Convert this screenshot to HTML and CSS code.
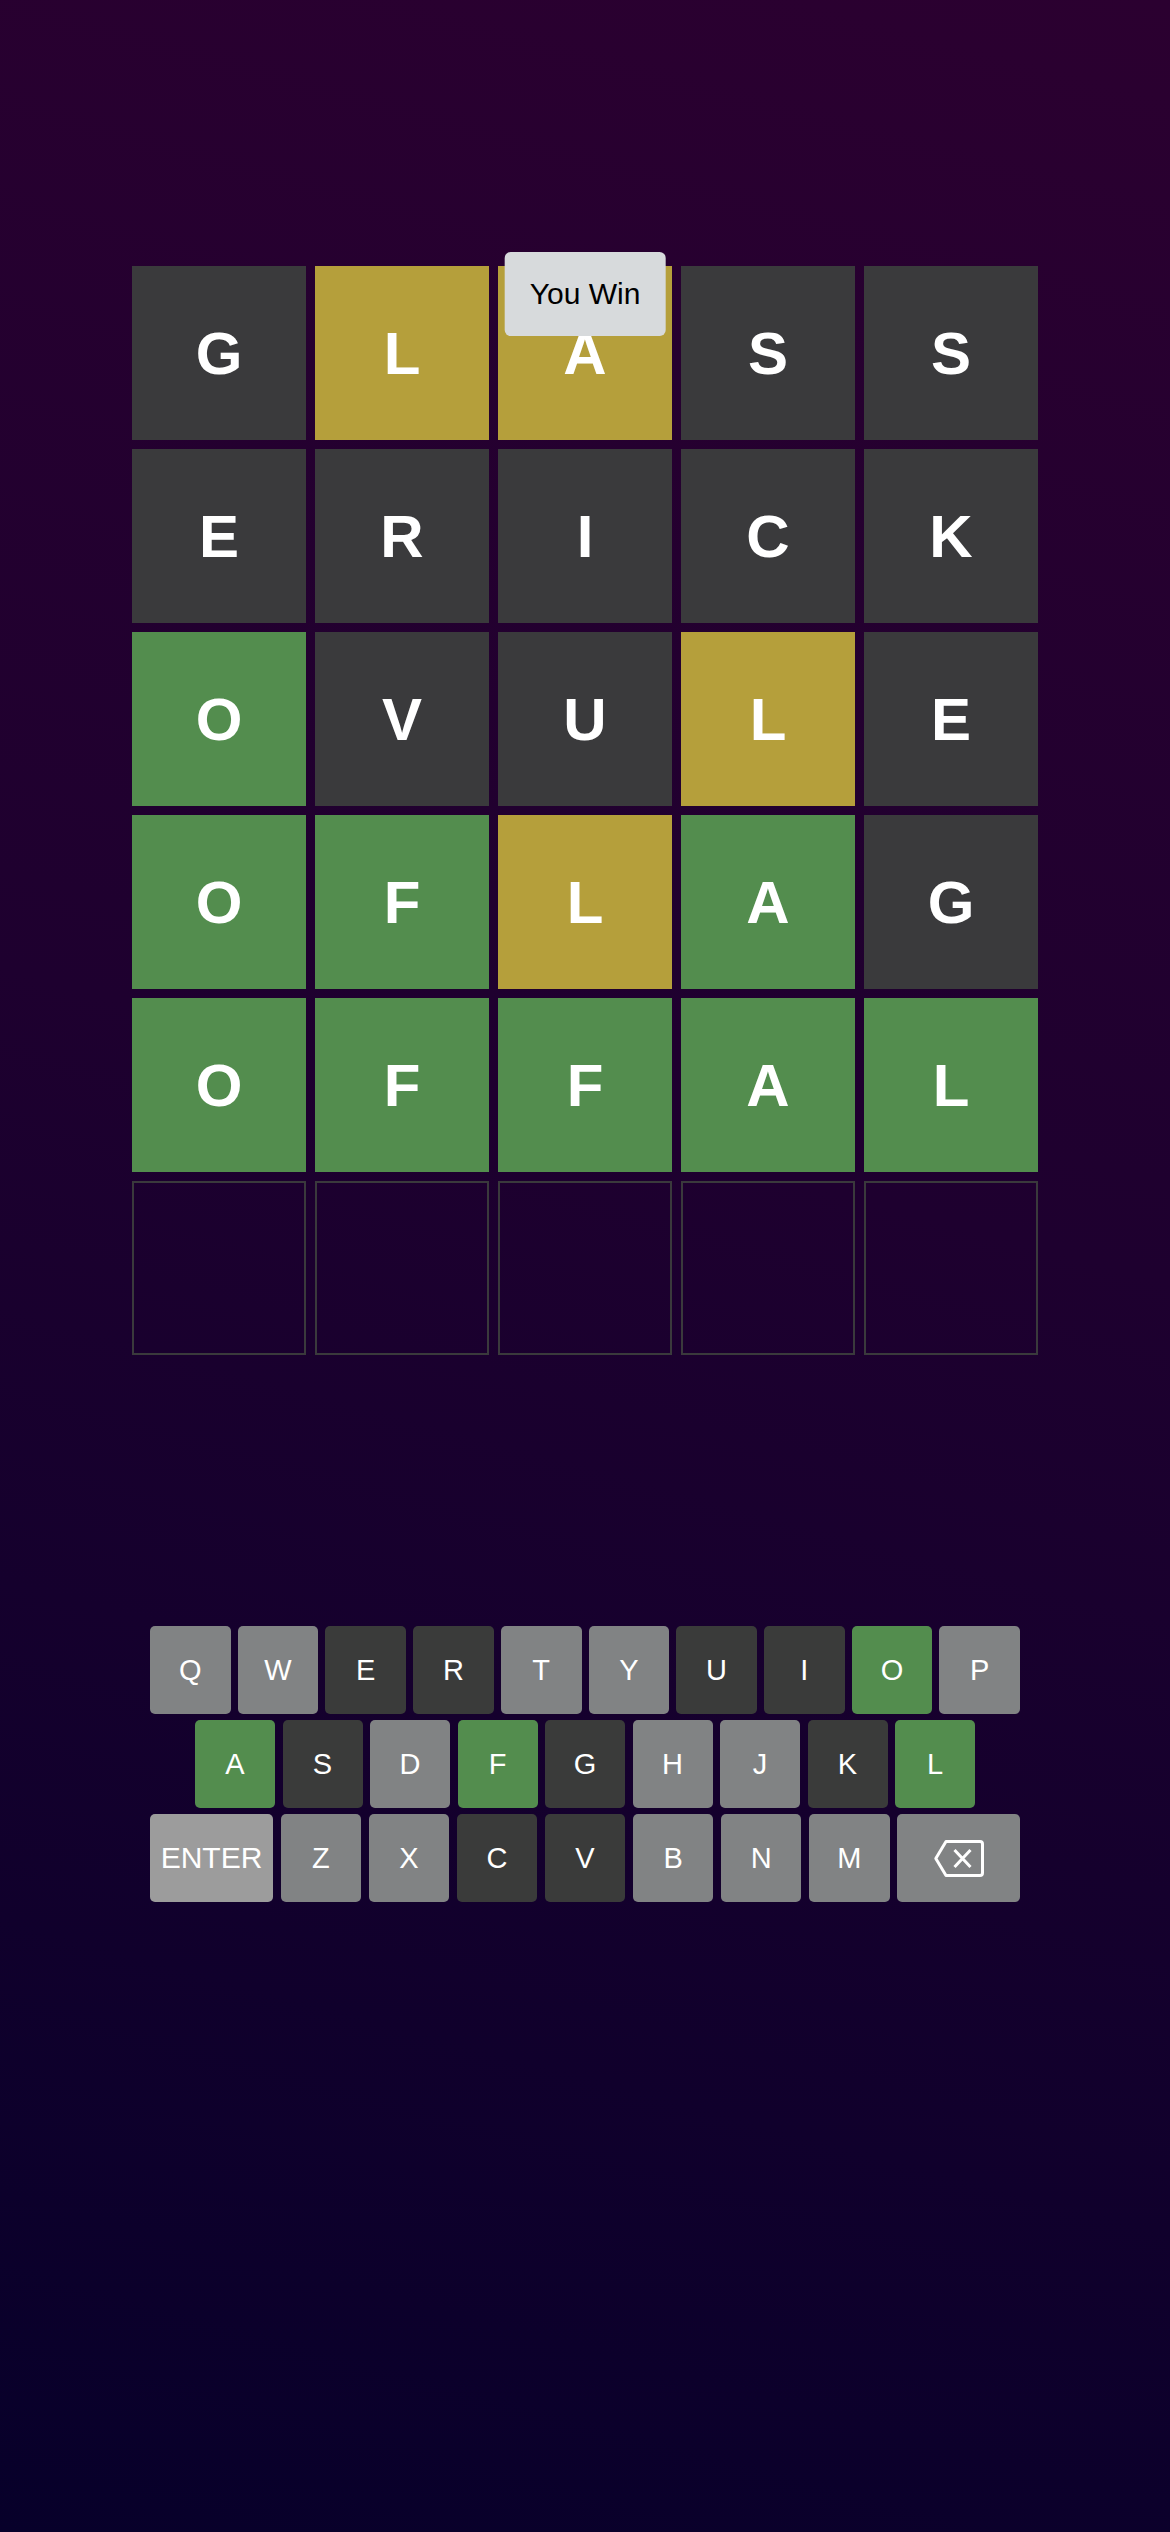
FILE: index.html
```html
<!DOCTYPE html>
<html lang="en">
<head>
<meta charset="utf-8">
<title>Wordle</title>
<link rel="stylesheet" href="styles.css">
</head>
<body>
<main class="app">
  <section class="board-wrap">
    <div class="toast">You Win</div>
    <div class="board">
      <div class="tile absent">G</div>
      <div class="tile present">L</div>
      <div class="tile present">A</div>
      <div class="tile absent">S</div>
      <div class="tile absent">S</div>

      <div class="tile absent">E</div>
      <div class="tile absent">R</div>
      <div class="tile absent">I</div>
      <div class="tile absent">C</div>
      <div class="tile absent">K</div>

      <div class="tile correct">O</div>
      <div class="tile absent">V</div>
      <div class="tile absent">U</div>
      <div class="tile present">L</div>
      <div class="tile absent">E</div>

      <div class="tile correct">O</div>
      <div class="tile correct">F</div>
      <div class="tile present">L</div>
      <div class="tile correct">A</div>
      <div class="tile absent">G</div>

      <div class="tile correct">O</div>
      <div class="tile correct">F</div>
      <div class="tile correct">F</div>
      <div class="tile correct">A</div>
      <div class="tile correct">L</div>

      <div class="tile empty"></div>
      <div class="tile empty"></div>
      <div class="tile empty"></div>
      <div class="tile empty"></div>
      <div class="tile empty"></div>
    </div>
  </section>

  <section class="keyboard">
    <div class="kb-row kb-row-top">
      <button class="key">Q</button>
      <button class="key">W</button>
      <button class="key k-absent">E</button>
      <button class="key k-absent">R</button>
      <button class="key">T</button>
      <button class="key">Y</button>
      <button class="key k-absent">U</button>
      <button class="key k-absent">I</button>
      <button class="key k-correct">O</button>
      <button class="key">P</button>
    </div>
    <div class="kb-row kb-row-mid">
      <button class="key k-correct">A</button>
      <button class="key k-absent">S</button>
      <button class="key">D</button>
      <button class="key k-correct">F</button>
      <button class="key k-absent">G</button>
      <button class="key">H</button>
      <button class="key">J</button>
      <button class="key k-absent">K</button>
      <button class="key k-correct">L</button>
    </div>
    <div class="kb-row kb-row-bottom">
      <button class="key key-wide key-enter">ENTER</button>
      <button class="key">Z</button>
      <button class="key">X</button>
      <button class="key k-absent">C</button>
      <button class="key k-absent">V</button>
      <button class="key">B</button>
      <button class="key">N</button>
      <button class="key">M</button>
      <button class="key key-wide" aria-label="backspace">
        <svg class="bksp" width="50" height="37" viewBox="0 0 50 37" fill="none" stroke="#ffffff" stroke-width="3" stroke-linejoin="round" stroke-linecap="butt">
          <path d="M12 1.5 H46 Q48.5 1.5 48.5 4 V33 Q48.5 35.5 46 35.5 H12 L1.8 18.5 Z"/>
          <path d="M20.5 10 L36.5 27 M36.5 10 L20.5 27"/>
        </svg>
      </button>
    </div>
  </section>
</main>
</body>
</html>
```
FILE: styles.css
```css
html, body {
  margin: 0;
  padding: 0;
}

body {
  width: 1170px;
  min-height: 2532px;
  background: linear-gradient(195deg, #2b0030 0%, #1e002f 45%, #07002a 100%);
  font-family: "Liberation Sans", Arial, sans-serif;
  color: #ffffff;
}

.app {
  display: flex;
  flex-direction: column;
  align-items: center;
  padding-top: 266px;
}

.board-wrap {
  position: relative;
}

.board {
  display: grid;
  grid-template-columns: repeat(5, 174px);
  grid-auto-rows: 174px;
  gap: 9px;
}

.tile {
  display: flex;
  align-items: center;
  justify-content: center;
  font-size: 60px;
  font-weight: 700;
  color: #ffffff;
  box-sizing: border-box;
}

.absent { background: #3a3a3c; }
.present { background: #b59f3b; }
.correct { background: #538d4e; }
.empty {
  border: 2px solid #3a3a3c;
  background: transparent;
}

.toast {
  position: absolute;
  top: -14px;
  left: 50%;
  transform: translateX(-50%);
  z-index: 2;
  height: 84px;
  padding: 0 25px;
  box-sizing: border-box;
  display: flex;
  align-items: center;
  background: #d7dadc;
  color: #000000;
  font-size: 30px;
  border-radius: 6px;
  white-space: nowrap;
}

.keyboard {
  margin-top: 271px;
  width: 870px;
  display: flex;
  flex-direction: column;
  gap: 6px;
}

.kb-row {
  display: flex;
  gap: 7px;
}

.kb-row-mid {
  padding: 0 45px;
  gap: 7.5px;
}

.kb-row-bottom {
  gap: 7.5px;
}

.key {
  flex: 1 1 0;
  min-width: 0;
  height: 88px;
  border: none;
  border-radius: 5px;
  background: #818384;
  color: #ffffff;
  font-family: "Liberation Sans", Arial, sans-serif;
  font-size: 29px;
  padding: 0;
  display: flex;
  align-items: center;
  justify-content: center;
}

.key-wide { flex: 0 0 123px; }

.key-enter {
  background: #9c9c9c;
  font-size: 30px;
}

.k-absent { background: #3a3b3a; }
.k-correct { background: #538d4e; }

.bksp { display: block; }
```
